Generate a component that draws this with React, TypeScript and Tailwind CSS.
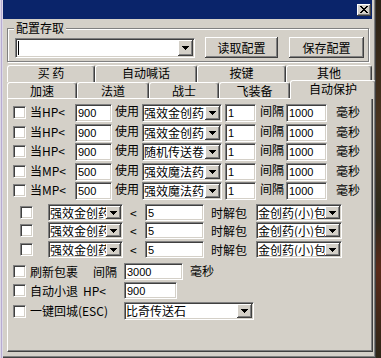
import React from "react";

const CJK = "font-['Noto_Sans_CJK_SC',sans-serif]";
const NUM = "font-['Liberation_Sans',sans-serif]";
const sunken =
  "bg-white border border-t-[#808080] border-l-[#808080] border-r-white border-b-white shadow-[inset_1px_1px_0_#404040,inset_-1px_-1px_0_#d4d0c8]";
const raised =
  "bg-[#d4d0c8] shadow-[inset_-1px_-1px_0_#404040,inset_1px_1px_0_#ffffff,inset_-2px_-2px_0_#808080]";

function Arrow() {
  return (
    <svg width="7" height="4" viewBox="0 0 7 4" shapeRendering="crispEdges">
      <rect x="0" y="0" width="7" height="1" fill="#000" />
      <rect x="1" y="1" width="5" height="1" fill="#000" />
      <rect x="2" y="2" width="3" height="1" fill="#000" />
      <rect x="3" y="3" width="1" height="1" fill="#000" />
    </svg>
  );
}

function Combo({ text, w, h }: { text: string; w: string; h: string }) {
  return (
    <div className={`${sunken} ${w} ${h} flex py-px pr-px shrink-0`}>
      <div
        className={`flex-1 overflow-hidden whitespace-nowrap flex items-center pl-[1px] text-[12px] leading-[14px] ${CJK}`}
      >
        {text}
      </div>
      <div className={`${raised} w-[15px] h-full flex items-center justify-center shrink-0`}>
        <Arrow />
      </div>
    </div>
  );
}

function Input({ v, w, h }: { v: string; w: string; h: string }) {
  return (
    <div
      className={`${sunken} ${w} ${h} flex items-center pl-[2px] pt-[1px] text-[11px] shrink-0 ${NUM}`}
    >
      {v}
    </div>
  );
}

function Check() {
  return <div className={`${sunken} w-[13px] h-[13px] shrink-0`} />;
}

function Label({ children, cls }: { children: React.ReactNode; cls: string }) {
  return (
    <div className={`${cls} shrink-0 whitespace-nowrap text-[12px] leading-[14px] ${CJK}`}>
      {children}
    </div>
  );
}

const topRows = [
  { l: "当HP<", v: "900", item: "强效金创药", mt: "mt-0" },
  { l: "当HP<", v: "900", item: "强效金创药", mt: "mt-[2px]" },
  { l: "当HP<", v: "900", item: "随机传送卷", mt: "mt-px" },
  { l: "当MP<", v: "500", item: "强效魔法药", mt: "mt-[2px]" },
  { l: "当MP<", v: "500", item: "强效魔法药", mt: "mt-px" },
];

const midRows = ["mt-[4px]", "mt-px", "mt-[2px]"];

function Tab({
  label,
  w,
  h,
  extra = "",
}: {
  label: string;
  w: string;
  h: string;
  extra?: string;
}) {
  return (
    <div
      className={`${w} ${h} ${extra} shrink-0 bg-[#d4d0c8] border-t border-l border-t-white border-l-white border-r border-r-[#404040] shadow-[inset_-1px_0_0_#808080] rounded-t-[3px] flex justify-center text-[12px] leading-[14px] ${CJK}`}
    >
      {label}
    </div>
  );
}

export default function App() {
  return (
    <div className="w-[381px] h-[358px] flex bg-[#2e2618] overflow-hidden text-black">
      <div className="w-[3px] h-full bg-[#dcd8e6] flex">
        <div className="w-px" />
        <div className="w-px bg-[#b8acd2]" />
      </div>
      <div className="w-[373px] h-full flex flex-col bg-[#d4d0c8] border-r border-b border-r-[#404040] border-b-[#404040] shadow-[inset_-1px_-1px_0_#808080]">
        {/* title bar */}
        <div className="w-[369px] h-[19px] bg-[#0a246a] flex items-center justify-end pr-[1px] shrink-0">
          <div className={`${raised} w-[14px] h-[12px] flex items-center justify-center`}>
            <svg width="8" height="7" viewBox="0 0 8 7" shapeRendering="crispEdges">
              <path d="M0 0h2v1h1v1h2v-1h1v-1h2v1h-1v1h-1v1h-1v1h1v1h1v1h1v1h-2v-1h-1v-1h-2v1h-1v1h-2v-1h1v-1h1v-1h1v-1h-1v-1h-1v-1h-1z" fill="#000" />
            </svg>
          </div>
        </div>

        <div className="pl-[4px] flex flex-col">
          {/* group box */}
          <div className="relative mt-[9px] w-[362px] h-[34px] border border-[#808080] shadow-[inset_1px_1px_0_#ffffff,1px_1px_0_#ffffff]">
            <span
              className={`absolute left-[6px] top-[-8px] px-[2px] bg-[#d4d0c8] text-[12px] leading-[14px] ${CJK}`}
            >
              配置存取
            </span>
            <div className="flex items-end pl-[7px] pt-[8px]">
              <div className={`${sunken} w-[180px] h-[20px] flex p-px shrink-0`}>
                <div className="flex-1 flex items-center pl-[1px]">
                  <div className="w-px h-[14px] bg-black" />
                </div>
                <div className={`${raised} w-[15px] h-full flex items-center justify-center`}>
                  <Arrow />
                </div>
              </div>
              <div
                className={`${raised} ml-[10px] w-[73px] h-[21px] flex items-center justify-center text-[12px] leading-[14px] ${CJK}`}
              >
                读取配置
              </div>
              <div
                className={`${raised} ml-[11px] w-[75px] h-[21px] flex items-center justify-center text-[12px] leading-[14px] ${CJK}`}
              >
                保存配置
              </div>
            </div>
          </div>

          {/* tabs */}
          <div className="mt-[3px] flex w-[366px] h-[17px]">
            <Tab label="买 药" w="w-[88px]" h="h-[17px]" />
            <Tab label="自动喊话" w="w-[102px]" h="h-[17px]" />
            <Tab label="按键" w="w-[89px]" h="h-[17px]" />
            <Tab label="其他" w="w-[86px]" h="h-[17px]" />
          </div>
          <div className="flex items-end w-[369px] h-[16px]">
            <Tab label="加速" w="w-[70px]" h="h-[16px]" extra="pt-px" />
            <Tab label="法道" w="w-[72px]" h="h-[16px]" extra="pt-px" />
            <Tab label="战士" w="w-[70px]" h="h-[16px]" extra="pt-px" />
            <Tab label="飞装备" w="w-[71px]" h="h-[16px]" extra="pt-px" />
            <Tab label="自动保护" w="w-[86px]" h="h-[19px]" extra="relative z-10 -mb-px pt-px" />
          </div>

          {/* panel */}
          <div className="w-[366px] h-[254px] border-t border-l border-t-white border-l-white border-r border-b border-r-[#404040] border-b-[#404040] shadow-[inset_-1px_-1px_0_#808080] pt-[5px] flex flex-col">
            {topRows.map((r, i) => (
              <div key={i} className={`${r.mt} flex items-start h-[18px]`}>
                <div className="ml-[5px] mt-[2px]">
                  <Check />
                </div>
                <Label cls="w-[49px] pl-[4px] mt-px">{r.l}</Label>
                <Input v={r.v} w="w-[37px]" h="h-[18px]" />
                <Label cls="w-[30px] pl-[3px]">使用</Label>
                <Combo text={r.item} w="w-[80px]" h="h-[18px]" />
                <div className="w-[3px]" />
                <Input v="1" w="w-[31px]" h="h-[18px]" />
                <Label cls="w-[30px] pl-[4px]">间隔</Label>
                <Input v="1000" w="w-[41px]" h="h-[18px]" />
                <Label cls="pl-[9px] mt-px">毫秒</Label>
              </div>
            ))}

            {midRows.map((mt, i) => (
              <div key={i} className={`${mt} flex items-center h-[17px]`}>
                <div className="ml-[12px]">
                  <Check />
                </div>
                <div className="ml-[15px]">
                  <Combo text="强效金创药" w="w-[75px]" h="h-[17px]" />
                </div>
                <Label cls="w-[22px] pl-[7px]">&lt;</Label>
                <Input v="5" w="w-[59px]" h="h-[17px]" />
                <Label cls="w-[52px] pl-[7px]">时解包</Label>
                <Combo text="金创药(小)包" w="w-[86px]" h="h-[17px]" />
              </div>
            ))}

            <div className="mt-[5px] flex items-center h-[17px]">
              <div className="ml-[5px]">
                <Check />
              </div>
              <Label cls="w-[67px] pl-[4px]">刷新包裹</Label>
              <Label cls="w-[31px]">间隔</Label>
              <Input v="3000" w="w-[59px]" h="h-[17px]" />
              <Label cls="pl-[7px] -mt-[2px]">毫秒</Label>
            </div>

            <div className="mt-[2px] flex items-center h-[17px]">
              <div className="ml-[5px]">
                <Check />
              </div>
              <Label cls="w-[98px] pl-[4px]">
                自动小退<span className="ml-[5px]">HP&lt;</span>
              </Label>
              <Input v="900" w="w-[53px]" h="h-[17px]" />
            </div>

            <div className="mt-[3px] flex items-center h-[18px]">
              <div className="ml-[5px]">
                <Check />
              </div>
              <Label cls="w-[98px] pl-[4px]">一键回城(ESC)</Label>
              <Combo text="比奇传送石" w="w-[130px]" h="h-[18px]" />
            </div>
          </div>
        </div>
      </div>
      <div className="flex-1 h-full bg-[linear-gradient(180deg,#2a2216_0%,#4a3420_35%,#2c2a1c_60%,#5a2a1a_75%,#2e2618_100%)]" />
    </div>
  );
}
